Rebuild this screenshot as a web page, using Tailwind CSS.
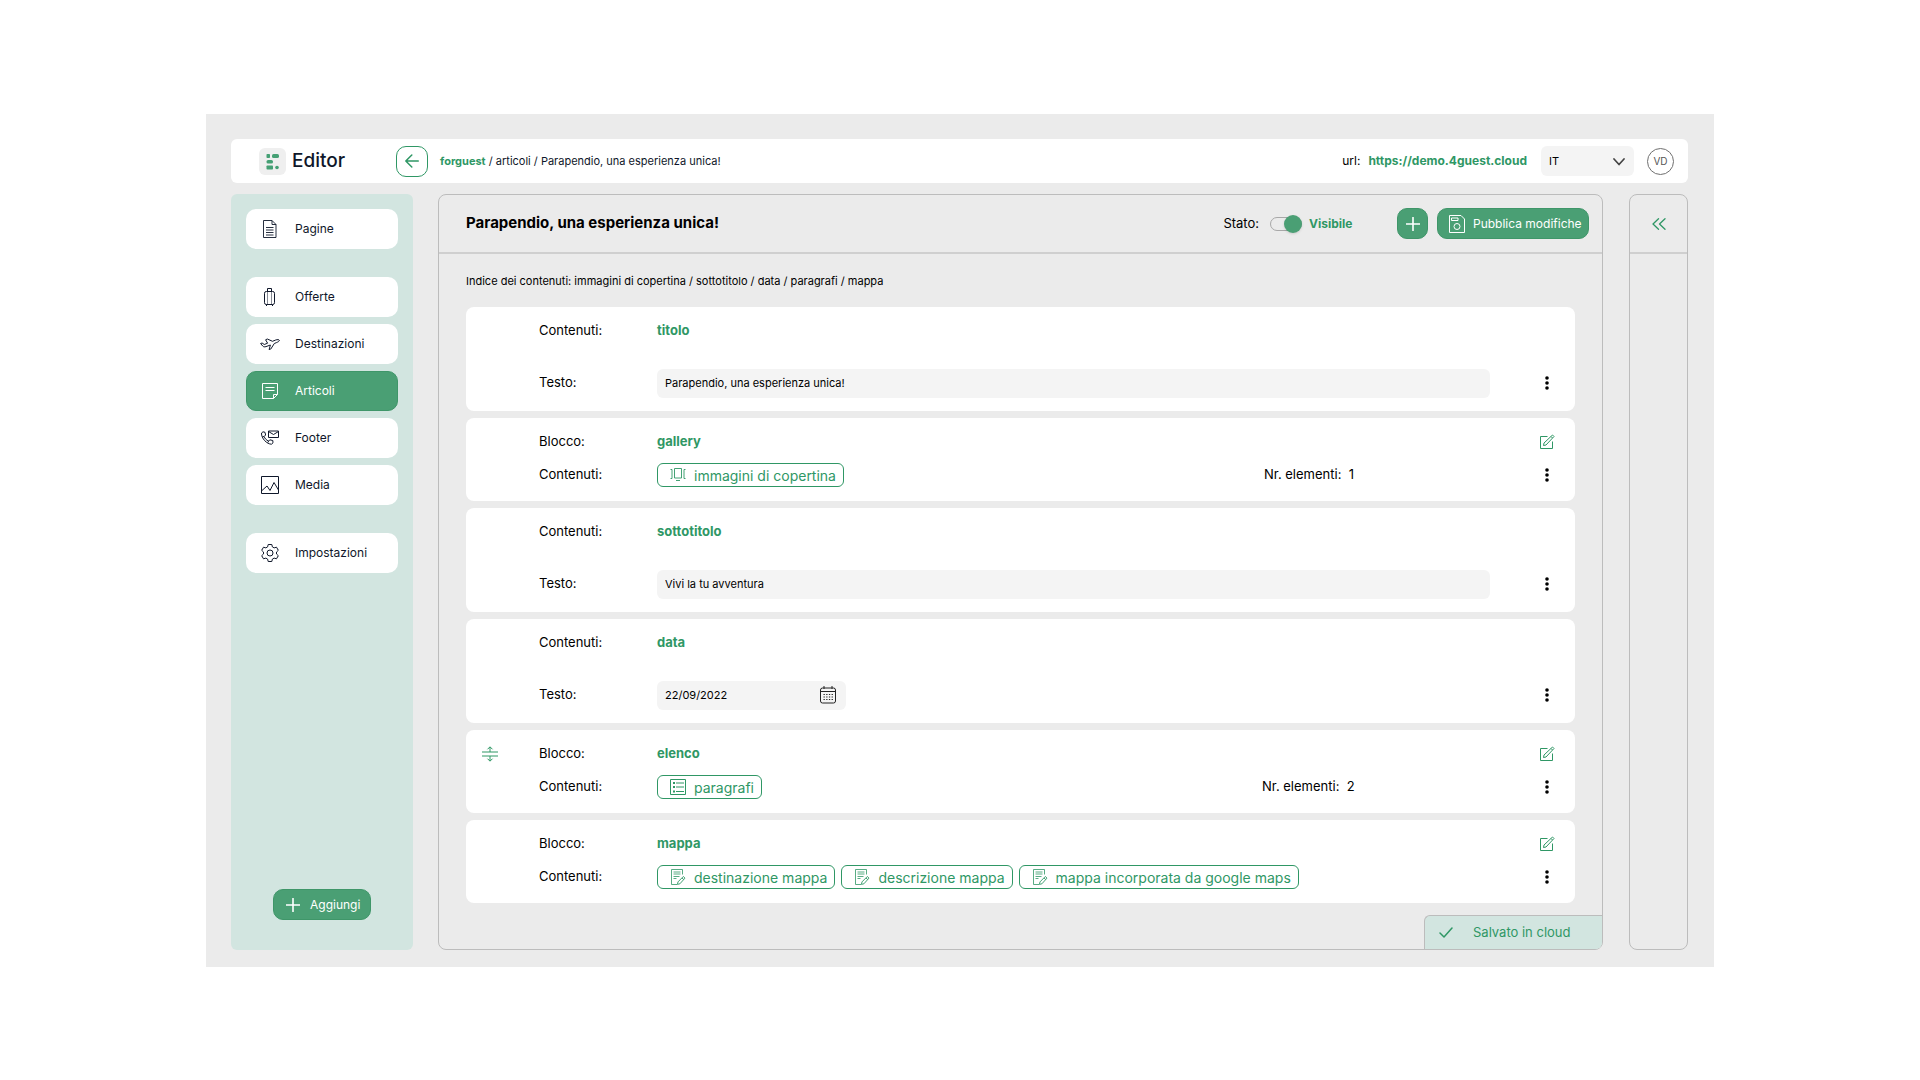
<!DOCTYPE html>
<html lang="it">
<head>
    <meta charset="UTF-8">
    <meta name="viewport" content="width=device-width, initial-scale=1.0">
    <title>Editor - Parapendio, una esperienza unica!</title>
    <script src="https://cdn.jsdelivr.net/npm/@tailwindcss/browser@4"></script>
    <style>
        body {
            font-family: 'Inter', 'Liberation Sans', sans-serif;
        }
    </style>
</head>
<body class="flex min-h-screen bg-white px-[206px] pt-[114px] pb-[113px] text-black">

    <!-- Shared icons -->
    <svg class="hidden" aria-hidden="true">
        <symbol id="icon-dots" viewBox="0 0 4 14">
            <circle cx="2" cy="2" r="1.8" fill="currentColor"/>
            <circle cx="2" cy="7" r="1.8" fill="currentColor"/>
            <circle cx="2" cy="12" r="1.8" fill="currentColor"/>
        </symbol>
        <symbol id="icon-edit" viewBox="0 0 16 16">
            <path d="M8.5 2.5H1.500v12h12V7.500" fill="none" stroke="currentColor"/>
            <path d="M13.500 1l1.500 1.500L7 11l-2.500.500.500-2.500zM12 2.500l1.500 1.500" fill="none" stroke="currentColor"/>
        </symbol>
        <symbol id="icon-plus" viewBox="0 0 14 14">
            <path d="M7 .5v13M.5 7h13" fill="none" stroke="currentColor" stroke-width="1.600" stroke-linecap="round"/>
        </symbol>
        <symbol id="icon-note" viewBox="0 0 16 16">
            <path d="M12.500 5.500v-5H1.500v15h5.500M3.500 3h7M3.500 5h7M3.500 7.500h6M3.500 9.500h3" fill="none" stroke="currentColor" stroke-width=".8"/>
            <path d="M13.300 7.500l1.700 1.600-5.100 5.700-2.500.600.600-2.500zM12 9l1.700 1.500" fill="none" stroke="currentColor" stroke-width=".9"/>
        </symbol>
    </svg>

    <div class="flex flex-1 flex-col gap-[11px] bg-[#ebebeb] pt-[25px] pr-[26px] pb-[17px] pl-[25px]">

        <!-- Top bar -->
        <header class="flex h-[44px] items-center rounded-md bg-white pr-[14px] pl-[28px]">
            <div class="flex w-[137px] items-center gap-[6px]">
                <svg class="size-[27px]" viewBox="0 0 27 27">
                    <rect width="27" height="27" rx="6" fill="#efefef"/>
                    <g fill="#45a074">
                        <rect x="7.500" y="6" width="3.500" height="4" rx=".8"/>
                        <rect x="13" y="6" width="7" height="4" rx="1.600"/>
                        <rect x="7.500" y="12" width="6.500" height="3.500" rx="1.600"/>
                        <rect x="7.500" y="17.500" width="6.500" height="4" rx=".8"/>
                        <circle cx="18" cy="19.500" r="1.800"/>
                    </g>
                </svg>
                <span class="text-[19px] font-medium text-[#0f172a]">Editor</span>
            </div>
            <button type="button" aria-label="Indietro" class="flex h-[31px] w-[32px] items-center justify-center rounded-[10px] border border-[#2f9765] text-[#2f9765]">
                <svg class="size-[14px]" viewBox="0 0 14 14" fill="none" stroke="currentColor" stroke-width="1.500" stroke-linecap="round" stroke-linejoin="round"><path d="M13.300 7H.8M6.800 1L.8 7l6 6"/></svg>
            </button>
            <nav aria-label="Percorso" class="ml-[12px] text-[11px] text-[#0f172a]">
                <a href="#" class="font-bold text-[#2f9765]">forguest</a> / <a href="#">articoli</a> / Parapendio, una esperienza unica!
            </nav>

            <div class="ml-auto flex items-center">
                <span class="text-[12px]">url:</span>
                <a href="#" class="ml-2 text-[12px] font-bold text-[#2f9765]">https://demo.4guest.cloud</a>
                <div class="relative ml-[14px]">
                    <select aria-label="Lingua" class="h-[30px] w-[93px] appearance-none rounded-md bg-[#f4f4f4] pl-2 text-[11px]">
                        <option>IT</option>
                    </select>
                    <svg class="pointer-events-none absolute top-[12px] right-[9px] h-[8px] w-[12px]" viewBox="0 0 12 8" fill="none" stroke="#444" stroke-width="1.700" stroke-linecap="round" stroke-linejoin="round"><path d="M1 1l5 5.500L11 1"/></svg>
                </div>
                <button type="button" class="ml-[13px] flex size-[27px] items-center justify-center rounded-full border border-[#707070] text-[10px] text-[#555]">VD</button>
            </div>
        </header>

        <div class="flex flex-1">

            <!-- Sidebar -->
            <aside class="flex w-[182px] shrink-0 flex-col rounded-md bg-[#d2e5e0] px-[15px] pt-[15px] pb-[30px]">
                <nav class="flex flex-col gap-[7px] text-[12px] text-[#0f172a]">
                    <a href="#" class="mb-[21px] flex h-[40px] items-center rounded-[10px] bg-white">
                        <svg class="ml-[14px] size-[20px]" viewBox="0 0 20 20" fill="none" stroke="currentColor"><path d="M3.500 1.500h8.500l4 4v13H3.500zM12 1.500v4h4M6 8.500h7.500M6 11h7.500M6 13.500h7.500M6 16h7.500" stroke-width=".9"/></svg>
                        <span class="ml-[15px]">Pagine</span>
                    </a>
                    <a href="#" class="flex h-[40px] items-center rounded-[10px] bg-white">
                        <svg class="ml-[14px] size-[20px]" viewBox="0 0 20 20" fill="none" stroke="currentColor"><rect x="4.500" y="4.500" width="10" height="13" rx="1.800"/><path d="M7.500 4.500v-3h4v3M6.500 17.500v1.500M12.500 17.500v1.500"/><path d="M7.500 4.500v13M11.500 4.500v13" stroke-width=".5"/></svg>
                        <span class="ml-[15px]">Offerte</span>
                    </a>
                    <a href="#" class="flex h-[40px] items-center rounded-[10px] bg-white">
                        <svg class="ml-[14px] size-[20px]" viewBox="0 0 20 20" fill="none" stroke="currentColor" stroke-linejoin="round"><path d="M.6 9.500l1.500-.5 2.200 1.500 3.300-1.300L5.600 5.800 7.300 5l5.200 2.300 3.200-1.300c1.600-.6 3.500-.4 3.700.3.200.8-1.400 1.700-2.700 2.200l-2.400 1-3.500 5.500-1.700.6 1.300-4.600-4.400 1.600c-1.400.5-2.600.3-3.300-.6z"/></svg>
                        <span class="ml-[15px]">Destinazioni</span>
                    </a>
                    <a href="#" aria-current="page" class="flex h-[40px] items-center rounded-[10px] border border-[#3f9669] bg-[#4a9f74] text-white">
                        <svg class="ml-[13px] size-[20px]" viewBox="0 0 20 20" fill="none" stroke="currentColor"><path d="M2.500 2.500h15v11l-4 4h-11zM13.500 17.500v-4h4M5.500 6.500h9M5.500 9.500h9"/></svg>
                        <span class="ml-[15px]">Articoli</span>
                    </a>
                    <a href="#" class="flex h-[40px] items-center rounded-[10px] bg-white">
                        <svg class="ml-[14px] size-[20px]" viewBox="0 0 20 20" fill="none" stroke="currentColor" stroke-linejoin="round"><path d="M8.500 3h10v6.500h-10zM8.500 3.500l5 3 5-3"/><path d="M1.500 5l1.500-1.200 2 .5.600 2.700-1.500 1.500c.7 2 2.300 3.700 4.500 4.600l1.200-1.300 3 .7.200 2.300-1.500 1.400C7 16.200 1.200 10.500 1.500 5zM4.100 8.500l-1.700.4M8.600 13.100l-.8 1.500"/></svg>
                        <span class="ml-[15px]">Footer</span>
                    </a>
                    <a href="#" class="mb-[21px] flex h-[40px] items-center rounded-[10px] bg-white">
                        <svg class="ml-[14px] size-[20px]" viewBox="0 0 20 20" fill="none" stroke="currentColor"><path d="M1.500 1.500h17v17h-17zM2 15.500L7 11l3 4.500 4-8 4.500 7.500"/></svg>
                        <span class="ml-[15px]">Media</span>
                    </a>
                    <a href="#" class="flex h-[40px] items-center rounded-[10px] bg-white">
                        <svg class="ml-[14px] size-[20px]" viewBox="0 0 20 20" fill="none" stroke="currentColor" stroke-linejoin="round"><path d="M8.200 1.500h3.600l.6 2.400 1.700 1 2.400-.7 1.800 3.100-1.800 1.700v2l1.800 1.700-1.800 3.100-2.400-.7-1.700 1-.6 2.400H8.200l-.6-2.400-1.700-1-2.400.7-1.800-3.100L3.500 11V9L1.700 7.300l1.800-3.100 2.400.7 1.700-1z"/><circle cx="10" cy="10" r="3"/></svg>
                        <span class="ml-[15px]">Impostazioni</span>
                    </a>
                </nav>
                <button type="button" class="mx-auto mt-auto flex h-[31px] w-[98px] items-center rounded-[10px] border border-[#3f9669] bg-[#4a9f74] pl-[12px] text-[12px] text-white">
                    <svg class="size-[14px]"><use href="#icon-plus"/></svg>
                    <span class="ml-[10px]">Aggiungi</span>
                </button>
            </aside>

            <!-- Main panel -->
            <main class="relative ml-[25px] flex flex-1 flex-col rounded-lg border border-[#bcbcbc]">
                <div class="flex h-[59px] items-center border-b-2 border-[#cfcfcf] pr-[13px] pl-[27px]">
                    <h1 class="text-[15px] font-bold">Parapendio, una esperienza unica!</h1>
                    <label for="stato" class="ml-auto text-[13px]">Stato:</label>
                    <input id="stato" type="checkbox" checked class="relative ml-[11px] h-[14px] w-[32px] appearance-none rounded-full border border-[#a8a8a8] before:absolute before:-top-[3px] before:-right-px before:size-[18px] before:rounded-full before:bg-[#4a9f74] before:shadow-sm before:content-['']">
                    <span class="ml-[7px] w-[88px] text-[12px] font-bold text-[#2f9765]">Visibile</span>
                    <button type="button" aria-label="Aggiungi contenuto" class="flex size-[31px] items-center justify-center rounded-[10px] border border-[#3f9669] bg-[#4a9f74] text-white">
                        <svg class="size-[14px]"><use href="#icon-plus"/></svg>
                    </button>
                    <button type="button" class="ml-[9px] flex h-[31px] w-[152px] items-center rounded-[10px] border border-[#3f9669] bg-[#4a9f74] pl-[11px] text-[12px] text-white">
                        <svg class="h-[18px] w-[16px]" viewBox="0 0 16 18" fill="none" stroke="currentColor"><path d="M.5.500h11.500l3.500 3.500v13.500H.5zM2.500 3h6.500v2.500H2.500z"/><circle cx="8" cy="11.500" r="3"/></svg>
                        <span class="ml-[8px]">Pubblica modifiche</span>
                    </button>
                </div>

                <div class="px-[27px] pt-[18px] pb-[46px]">
                    <p class="text-[11px] leading-[18px]">Indice dei contenuti: immagini di copertina / sottotitolo / data / paragrafi / mappa</p>

                    <div class="mt-[17px] flex flex-col gap-[7px] text-[13px]">

                        <!-- Titolo -->
                        <section class="flex h-[104px] flex-col gap-[27px] rounded-lg bg-white pt-[13px] pl-[73px]">
                            <div class="flex h-[22px] items-center">
                                <span class="w-[118px]">Contenuti:</span>
                                <h2 class="font-bold text-[#2f9765]">titolo</h2>
                            </div>
                            <div class="flex h-[28px] items-center">
                                <label for="titolo" class="w-[118px]">Testo:</label>
                                <input id="titolo" type="text" value="Parapendio, una esperienza unica!" class="h-[29px] flex-1 rounded-md bg-[#f4f4f4] px-2 text-[11px]">
                                <button type="button" aria-label="Opzioni titolo" class="ml-[29px] flex w-[56px] justify-center"><svg class="h-[14px] w-[4px]"><use href="#icon-dots"/></svg></button>
                            </div>
                        </section>

                        <!-- Gallery -->
                        <section class="flex h-[83px] flex-col gap-[10px] rounded-lg bg-white pt-[13px] pl-[73px]">
                            <div class="flex h-[22px] items-center">
                                <span class="w-[118px]">Blocco:</span>
                                <h2 class="font-bold text-[#2f9765]">gallery</h2>
                                <button type="button" aria-label="Modifica gallery" class="ml-auto flex w-[56px] justify-center text-[#2f9765]"><svg class="size-[16px]"><use href="#icon-edit"/></svg></button>
                            </div>
                            <div class="flex h-[24px] items-center">
                                <span class="w-[118px]">Contenuti:</span>
                                <div class="flex flex-1 gap-[6px]">
                                    <button type="button" class="flex h-[24px] items-center gap-[8px] rounded-md border border-[#2f9765] pr-[7px] pl-[12px] text-[14px] text-[#2f9765]">
                                        <svg class="size-[16px]" viewBox="0 0 16 16" fill="none" stroke="currentColor"><path d="M.5 2.500h1.500v9H.5M15.500 2.500H14v9h1.500M4.500 1.500h7v9.500h-7zM6 13.500h4" stroke-width=".9"/></svg>
                                        immagini di copertina
                                    </button>
                                </div>
                                <span class="w-[255px]">Nr. elementi: &nbsp;1</span>
                                <button type="button" aria-label="Opzioni gallery" class="flex w-[56px] justify-center"><svg class="h-[14px] w-[4px]"><use href="#icon-dots"/></svg></button>
                            </div>
                        </section>

                        <!-- Sottotitolo -->
                        <section class="flex h-[104px] flex-col gap-[27px] rounded-lg bg-white pt-[13px] pl-[73px]">
                            <div class="flex h-[22px] items-center">
                                <span class="w-[118px]">Contenuti:</span>
                                <h2 class="font-bold text-[#2f9765]">sottotitolo</h2>
                            </div>
                            <div class="flex h-[28px] items-center">
                                <label for="sottotitolo" class="w-[118px]">Testo:</label>
                                <input id="sottotitolo" type="text" value="Vivi la tu avventura" class="h-[29px] flex-1 rounded-md bg-[#f4f4f4] px-2 text-[11px]">
                                <button type="button" aria-label="Opzioni sottotitolo" class="ml-[29px] flex w-[56px] justify-center"><svg class="h-[14px] w-[4px]"><use href="#icon-dots"/></svg></button>
                            </div>
                        </section>

                        <!-- Data -->
                        <section class="flex h-[104px] flex-col gap-[27px] rounded-lg bg-white pt-[13px] pl-[73px]">
                            <div class="flex h-[22px] items-center">
                                <span class="w-[118px]">Contenuti:</span>
                                <h2 class="font-bold text-[#2f9765]">data</h2>
                            </div>
                            <div class="flex h-[28px] items-center">
                                <label for="data" class="w-[118px]">Testo:</label>
                                <div class="relative">
                                    <input id="data" type="text" value="22/09/2022" class="h-[29px] w-[189px] rounded-md bg-[#f4f4f4] px-2 text-[11px]">
                                    <svg class="pointer-events-none absolute top-[5px] right-[10px] h-[18px] w-[16px]" viewBox="0 0 16 18" fill="none" stroke="#222"><rect x=".5" y="2" width="15" height="15" rx="2"/><path d="M.5 5.500h15M4 0v3M12 0v3"/><path d="M3.500 8.500h9.500M3.500 11h9.500M3.500 13.500h9.500" stroke-width="1.200" stroke-dasharray="1.300 1.400"/></svg>
                                </div>
                                <button type="button" aria-label="Opzioni data" class="ml-auto flex w-[56px] justify-center"><svg class="h-[14px] w-[4px]"><use href="#icon-dots"/></svg></button>
                            </div>
                        </section>

                        <!-- Elenco -->
                        <section class="flex h-[83px] flex-col gap-[10px] rounded-lg bg-white pt-[13px] pl-[16px]">
                            <div class="flex h-[22px] items-center">
                                <button type="button" aria-label="Sposta elenco" class="w-[57px] text-[#2f9765]">
                                    <svg class="size-[16px]" viewBox="0 0 16 16" fill="none" stroke="currentColor"><path d="M0 6h16M0 10h16M8 6V1M5.500 3.300L8 .8l2.500 2.500M8 10v5M5.500 12.700L8 15.200l2.500-2.500"/></svg>
                                </button>
                                <span class="w-[118px]">Blocco:</span>
                                <h2 class="font-bold text-[#2f9765]">elenco</h2>
                                <button type="button" aria-label="Modifica elenco" class="ml-auto flex w-[56px] justify-center text-[#2f9765]"><svg class="size-[16px]"><use href="#icon-edit"/></svg></button>
                            </div>
                            <div class="flex h-[24px] items-center pl-[57px]">
                                <span class="w-[118px]">Contenuti:</span>
                                <div class="flex flex-1 gap-[6px]">
                                    <button type="button" class="flex h-[24px] items-center gap-[8px] rounded-md border border-[#2f9765] pr-[7px] pl-[12px] text-[14px] text-[#2f9765]">
                                        <svg class="size-[16px]" viewBox="0 0 16 16" fill="none" stroke="currentColor"><path d="M.5.500h15v15H.5zM6 4h8M6 8h8M6 12.500h8"/><path d="M3 4h2M3 8h2M3 12.500h2" stroke-width="2"/></svg>
                                        paragrafi
                                    </button>
                                </div>
                                <span class="w-[257px]">Nr. elementi: &nbsp;2</span>
                                <button type="button" aria-label="Opzioni elenco" class="flex w-[56px] justify-center"><svg class="h-[14px] w-[4px]"><use href="#icon-dots"/></svg></button>
                            </div>
                        </section>

                        <!-- Mappa -->
                        <section class="flex h-[83px] flex-col gap-[10px] rounded-lg bg-white pt-[13px] pl-[73px]">
                            <div class="flex h-[22px] items-center">
                                <span class="w-[118px]">Blocco:</span>
                                <h2 class="font-bold text-[#2f9765]">mappa</h2>
                                <button type="button" aria-label="Modifica mappa" class="ml-auto flex w-[56px] justify-center text-[#2f9765]"><svg class="size-[16px]"><use href="#icon-edit"/></svg></button>
                            </div>
                            <div class="flex h-[24px] items-center">
                                <span class="w-[118px]">Contenuti:</span>
                                <div class="flex flex-1 gap-[6px]">
                                    <button type="button" class="flex h-[24px] items-center gap-[8px] rounded-md border border-[#2f9765] pr-[7px] pl-[12px] text-[14px] text-[#2f9765]">
                                        <svg class="size-[16px]"><use href="#icon-note"/></svg>
                                        destinazione mappa
                                    </button>
                                    <button type="button" class="flex h-[24px] items-center gap-[8px] rounded-md border border-[#2f9765] pr-[7px] pl-[12px] text-[14px] text-[#2f9765]">
                                        <svg class="size-[16px]"><use href="#icon-note"/></svg>
                                        descrizione mappa
                                    </button>
                                    <button type="button" class="flex h-[24px] items-center gap-[8px] rounded-md border border-[#2f9765] pr-[7px] pl-[12px] text-[14px] text-[#2f9765]">
                                        <svg class="size-[16px]"><use href="#icon-note"/></svg>
                                        mappa incorporata da google maps
                                    </button>
                                </div>
                                <button type="button" aria-label="Opzioni mappa" class="flex w-[56px] justify-center"><svg class="h-[14px] w-[4px]"><use href="#icon-dots"/></svg></button>
                            </div>
                        </section>
                    </div>
                </div>

                <!-- Save status -->
                <div role="status" class="absolute right-0 bottom-0 flex h-[34px] w-[178px] items-center rounded-tl-md rounded-br-md border-t border-l border-[#bcbcbc] bg-[#d2e5e0] pl-[14px] text-[13px] text-[#2f9765]">
                    <svg class="h-[11px] w-[14px]" viewBox="0 0 14 11" fill="none" stroke="currentColor" stroke-width="1.500" stroke-linecap="round" stroke-linejoin="round"><path d="M1 6l4 4L13 1"/></svg>
                    <span class="ml-[20px]">Salvato in cloud</span>
                </div>
            </main>

            <!-- Collapsed panel -->
            <aside class="ml-[26px] w-[59px] shrink-0 rounded-lg border border-[#bcbcbc]">
                <div class="flex h-[59px] items-center justify-center border-b-2 border-[#cfcfcf]">
                    <button type="button" aria-label="Espandi pannello" class="text-[#2f9765]">
                        <svg class="h-[12px] w-[14px]" viewBox="0 0 14 12" fill="none" stroke="currentColor" stroke-width="1.300" stroke-linecap="round" stroke-linejoin="round"><path d="M6.500.800L1 6l5.500 5.200M13 .8L7.500 6l5.500 5.200"/></svg>
                    </button>
                </div>
            </aside>
        </div>
    </div>

</body>
</html>
